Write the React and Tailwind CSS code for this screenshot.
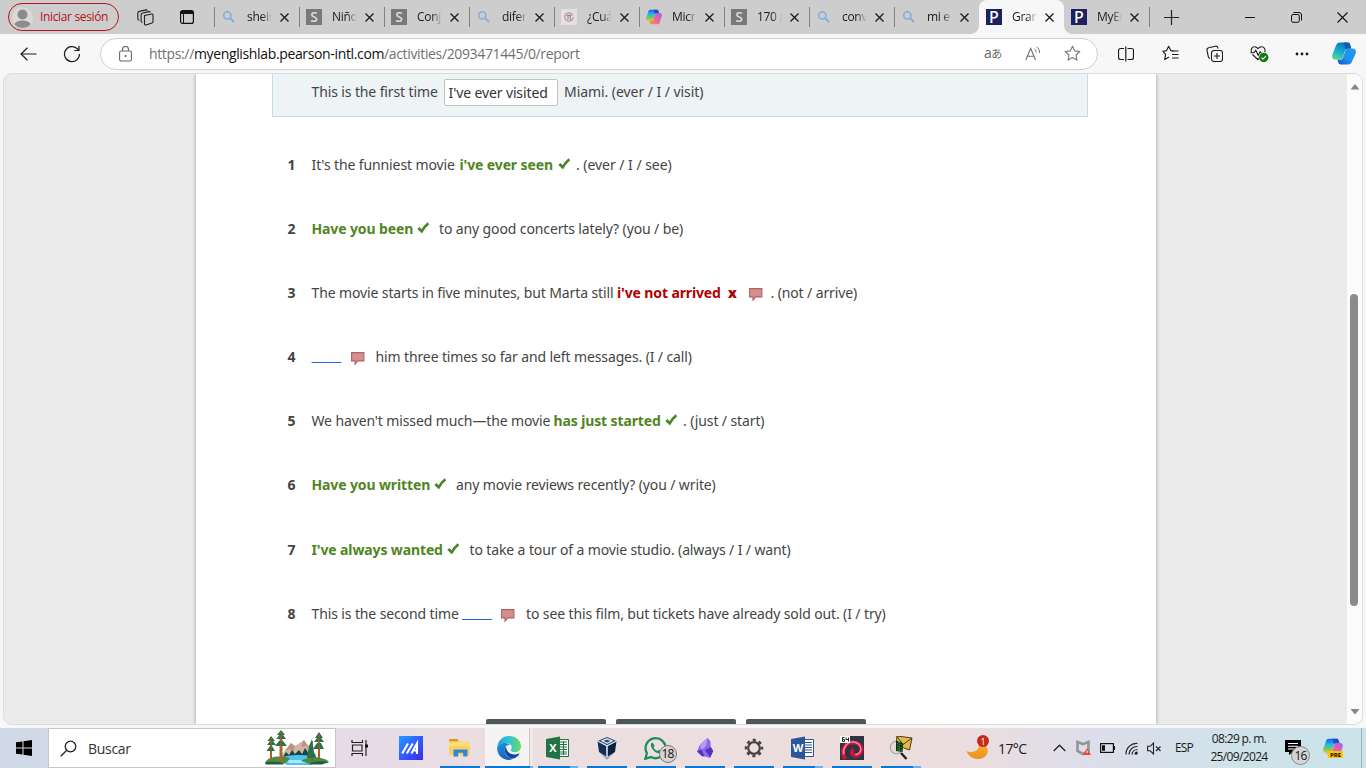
import React from "react";

const Svg = ({ w = 16, h = w, vb, className = "", children }) => (
  <svg width={w} height={h} viewBox={vb || `0 0 ${w} ${h}`} className={`shrink-0 block ${className}`} fill="none">
    {children}
  </svg>
);

const SearchFav = () => (
  <Svg>
    <circle cx="6.3" cy="6.3" r="3.6" stroke="#7fb0dc" strokeWidth="1.5" />
    <path d="M9 9l4.2 4.2" stroke="#7fb0dc" strokeWidth="1.8" />
  </Svg>
);
const SFav = () => (
  <span className="flex size-4 items-center justify-center bg-[#797979] font-['Open_Sans',sans-serif] text-[14px] leading-4 font-semibold text-[#dcdcdc]">S</span>
);
const PFav = () => (
  <span className="flex size-4 items-center justify-center bg-[#1c2260] font-['Noto_Sans',sans-serif] text-[16px] leading-4 font-medium text-white">P</span>
);
const PiFav = () => (
  <Svg>
    <rect width="16" height="16" fill="#e3e1e0" />
    <circle cx="8" cy="8" r="4.2" stroke="#e08a88" strokeWidth="1.2" strokeDasharray="24 4" />
    <path d="M5.600 6.400h5M7 6.600v4M9.300 6.600v3.400l.8.4" stroke="#6f8fb8" strokeWidth="1.100" />
  </Svg>
);

const CopilotColor = ({ w = 16 }) => (
  <Svg w={w} vb="0 0 24 24">
    <defs>
      <linearGradient id="cpa" x1="0" y1="0" x2="0" y2="1"><stop stopColor="#1b62e8" /><stop offset=".4" stopColor="#22b8e8" /><stop offset=".75" stopColor="#7ccb52" /><stop offset="1" stopColor="#f5c62c" /></linearGradient>
      <linearGradient id="cpb" x1="1" y1="0" x2="0" y2="1"><stop stopColor="#a55df0" /><stop offset=".5" stopColor="#ee6498" /><stop offset="1" stopColor="#ff9a3c" /></linearGradient>
    </defs>
    <path d="M7 1h9c1.600 0 2.300.7 2.800 2.300l.8 2.700h-3c-2 0-3 .7-3.600 2.600L10.600 16c-.6 1.600-1.300 2-3 2H3.500C.8 18-.3 16 .5 13L3.600 3.500C4.200 1.800 5.200 1 7 1z" fill="url(#cpa)" />
    <path d="M17 23H8.500c-1.600 0-2.300-.7-2.800-2.300L5 18h2.600c2 0 3-.7 3.600-2.600L13.600 8c.6-1.500 1.300-2 3-2h3.900c2.700 0 3.800 2 3 5l-3.100 9.500c-.6 1.700-1.600 2.500-3.400 2.500z" fill="url(#cpb)" />
    <path d="M11 1h5c1.600 0 2.300.7 2.800 2.300l.8 2.700h-3c-1.500 0-2.500.5-3.100 1.500z" fill="#1c4fc9" />
  </Svg>
);

const CopilotBlue = () => (
  <Svg w={24} h={23} vb="0 0 24 23">
    <defs>
      <linearGradient id="cba" x1=".6" y1="0" x2=".2" y2="1"><stop stopColor="#0a72b8" /><stop offset=".5" stopColor="#18a9cf" /><stop offset="1" stopColor="#5edb93" /></linearGradient>
      <linearGradient id="cbb" x1="1" y1="0" x2="0" y2="1"><stop stopColor="#2a97ee" /><stop offset=".55" stopColor="#1a94f0" /><stop offset="1" stopColor="#1650cf" /></linearGradient>
    </defs>
    <path d="M8 .5h7.500c1.500 0 2.300.9 2.700 2.200l.9 3.800h-2.600c-2 0-3 .7-3.600 2.500l-2 6.500c-.5 1.700-1.300 2.300-2.800 2.300H3.600C.6 17.800-.3 15.500.4 12.500L4 3.500C4.700 1.400 6 .5 8 .5z" fill="url(#cba)" />
    <path d="M16 22.500H9c-1.800 0-2.500-.9-2.900-2.400l-.6-2.300h2.600c1.700 0 2.500-.8 3-2.300l2.200-6.700c.6-1.700 1.500-2.300 3-2.300h4.200c3 0 3.900 2.300 3.200 5L20 19.500c-.7 2.100-2 3-4 3z" fill="url(#cbb)" />
    <path d="M11.500.5h4c1.500 0 2.300.9 2.700 2.200l.9 3.800h-2.600c-1.400 0-2.300.4-2.900 1.200z" fill="#0d5fae" />
  </Svg>
);

const TABS = [
  [SearchFav, "shein"],
  [SFav, "Niño"],
  [SFav, "Conj"],
  [SearchFav, "difer"],
  [PiFav, "¿Cuá"],
  [CopilotColor, "Micr"],
  [SFav, "170 p"],
  [SearchFav, "conv"],
  [SearchFav, "mi e"],
  [PFav, "Gram", true],
  [PFav, "MyEn"],
];

function Tab({ Icon, label, active, line }) {
  return (
    <div className={`relative flex h-full w-[85px] shrink-0 items-center ${active ? "rounded-t-[8px] bg-[#f7f7f7]" : ""}`}>
      {line && <span className="absolute top-[7px] left-0 h-5 w-px bg-[#818181]" />}
      {active && (
        <>
          <span className="absolute bottom-0 -left-2 size-2 bg-[radial-gradient(circle_at_0_0,#cdcdcd_7.5px,#f7f7f7_8px)]" />
          <span className="absolute -right-2 bottom-0 size-2 bg-[radial-gradient(circle_at_100%_0,#cdcdcd_7.5px,#f7f7f7_8px)]" />
        </>
      )}
      <span className="ml-[7px]"><Icon /></span>
      <span className="ml-[10px] w-[25px] overflow-hidden text-[12px] leading-4 tracking-[-0.3px] whitespace-nowrap text-[#1b1b1b] [mask-image:linear-gradient(to_right,black_60%,transparent)]">{label}</span>
      <Svg w={9} className="ml-[8px]"><path d="M.5.5l8 8M8.500.5l-8 8" stroke="#1b1b1b" strokeWidth="1.300" /></Svg>
    </div>
  );
}

function TitleBar() {
  return (
    <div className="flex h-[34px] shrink-0 items-center bg-[#cdcdcd]">
      <div className="ml-2 flex h-7 w-[111px] items-center rounded-full border border-[#b5121b] pl-[3px]">
        <Svg w={21}>
          <defs><clipPath id="av"><circle cx="10.5" cy="10.500" r="10.500" /></clipPath></defs>
          <circle cx="10.500" cy="10.500" r="10.500" fill="#dbd9d6" />
          <g clipPath="url(#av)" fill="#8d8b89"><circle cx="10.500" cy="7.500" r="5" /><ellipse cx="10.500" cy="17.500" rx="8" ry="4" /></g>
        </Svg>
        <span className="ml-[7px] text-[12px] tracking-[-0.35px] whitespace-nowrap text-[#b5121b]">Iniciar sesión</span>
      </div>
      <Svg w={17} className="ml-[18px]">
        <g stroke="#222" strokeWidth="1.100" strokeLinejoin="round" strokeLinecap="round">
          <path d="M7.500 6.500l7.300-1.500c.7-.1 1.200.3 1.200 1v6.600c0 .7-.3 1.100-1 1.300l-6 2c-.8.2-1.500-.2-1.500-1z" />
          <path d="M5 13.300c-.6-.2-.9-.7-.9-1.300V6c0-1.100.6-1.800 1.700-2l6.200-1.400c.6-.1 1 .1 1.100.6" />
          <path d="M1.900 11.300c-.7-.2-1.100-.8-1.100-1.500V4.300c0-1 .6-1.700 1.600-1.900L8.900.9c.6-.1 1 .1 1.200.6" />
        </g>
      </Svg>
      <Svg w={14} className="ml-[26px]">
        <rect x=".6" y=".6" width="12.800" height="12.800" rx="2" stroke="#111" strokeWidth="1.200" />
        <path d="M1 1h12v3H1z" fill="#111" /><path d="M3.500 4v9" stroke="#111" strokeWidth="1" />
      </Svg>
      <div className="ml-5 flex h-full">
        {TABS.map(([Icon, label, active], i) => (
          <Tab key={i} Icon={Icon} label={label} active={active} line={i < 9} />
        ))}
      </div>
      <span className="h-5 w-px bg-[#818181]" />
      <Svg w={15} className="ml-[14px]"><path d="M7.500 0v15M0 7.500h15" stroke="#222" strokeWidth="1.200" /></Svg>
      <div className="ml-[66px] flex items-center">
        <Svg w={10}><path d="M0 5.500h10" stroke="#111" /></Svg>
        <Svg w={11} className="ml-[36px]">
          <rect x=".5" y="2.500" width="7.800" height="7.800" rx="1.500" stroke="#111" />
          <path d="M2.500.5H8A2.500 2.500 0 0 1 10.500 3v5.500" stroke="#111" />
        </Svg>
        <Svg w={11} className="ml-[35px]"><path d="M.5.500l10 10M10.500.5l-10 10" stroke="#111" strokeWidth="1.100" /></Svg>
      </div>
    </div>
  );
}

function Toolbar() {
  return (
    <div className="flex h-[39px] shrink-0 items-center bg-[#f7f7f7]">
      <Svg w={17} h={14} className="ml-[20px]"><path d="M16.500 7H1M7.500.7L1 7l6.500 6.300" stroke="#1b1b1b" strokeWidth="1.200" /></Svg>
      <Svg w={18} className="ml-[26px]"><path d="M16.500 9A7.500 7.500 0 1 1 14 3.500L16 5.300M16 .8v4.700h-4.700" stroke="#1b1b1b" strokeWidth="1.200" /></Svg>
      <div className="ml-[19px] flex h-8 w-[998px] items-center rounded-full border border-[#cfcfcf] bg-white">
        <Svg w={13} h={16} className="ml-[18px]">
          <rect x=".6" y="5" width="11.800" height="10" rx="1.600" stroke="#666" strokeWidth="1.100" />
          <path d="M3.500 5V3.500a3 3 0 0 1 6 0V5" stroke="#666" strokeWidth="1.100" /><circle cx="6.500" cy="10" r="1" fill="#555" />
        </Svg>
        <span className="ml-[17px] w-[835px] text-[14px] tracking-[-0.355px] whitespace-nowrap text-[#707070]">
          https://<span className="text-[#111]">myenglishlab.pearson-intl.com</span>/activities/2093471445/0/report
        </span>
        <span className="w-[18px] font-['Open_Sans','Noto_Sans_CJK_JP',sans-serif] text-[14px] leading-4 tracking-[-0.5px] whitespace-nowrap text-[#666]">a<span className="text-[11px]">あ</span></span>
        <Svg w={16} h={15} className="ml-[23px]">
          <path d="M.8 14L5.700 2.500l4.900 11.500M2.400 10.200h6.600" stroke="#707070" strokeWidth="1.100" />
          <path d="M9.500 3c1 .6 1.600 1.600 1.700 3.500M11.700 1c1.700 1 2.900 2.800 3 6" stroke="#707070" />
        </Svg>
        <Svg w={17} vb="0 0 17 17" className="ml-[23px]"><path d="M8.500 1.200l2.200 4.700 5.100.6-3.800 3.500 1 5.100-4.500-2.500L4 15.100l1-5.100L1.200 6.500l5.100-.6z" stroke="#777" strokeWidth="1.100" strokeLinejoin="round" /></Svg>
      </div>
      <Svg w={16} className="ml-[20px]">
        <path d="M6 2.500H2.500a2 2 0 0 0-2 2v7a2 2 0 0 0 2 2H6M9.500 2.500h4a2 2 0 0 1 2 2v7a2 2 0 0 1-2 2h-4M7.800.5v15" stroke="#1b1b1b" strokeWidth="1.200" />
      </Svg>
      <Svg w={17} className="ml-[28px]">
        <path d="M11.500 6l-2.700-.4L6.600 1.200 4.600 5.600.8 6.200l2.800 3.200-.9 5L7 12" stroke="#1b1b1b" strokeWidth="1.100" strokeLinejoin="round" />
        <path d="M10 6h6.500M10 9.500h6.500M10 13h6.500" stroke="#1b1b1b" strokeWidth="1.200" />
      </Svg>
      <Svg w={17} className="ml-[27px]">
        <rect x="5.500" y="5.500" width="11" height="11" rx="2.500" stroke="#1b1b1b" strokeWidth="1.100" />
        <path d="M11 8v6M8 11h6" stroke="#1b1b1b" strokeWidth="1.100" />
        <path d="M4 13.500c-1-.2-1.500-.9-1.700-1.800L1 5.300C.8 4 1.400 3 2.700 2.700l6.500-1.500c1.300-.3 2.200.2 2.600 1.500l.3 1" stroke="#1b1b1b" strokeWidth="1.100" />
      </Svg>
      <Svg w={20} h={18} className="ml-[27px]">
        <path d="M9 14.500L7.500 13M1.500 7.500C.3 4.500 2 1.700 4.500 1.700c1.700 0 2.800.9 3.500 1.900.7-1 1.900-1.900 3.600-1.900 2.600 0 4.300 2.800 3.200 5.500" stroke="#1b1b1b" strokeWidth="1.100" />
        <path d="M.5 7.800h3.300l2-2.500 2.400 5 2-3.500 1 1.200M2.500 9.500L8 14.800" stroke="#1b1b1b" strokeWidth="1.100" />
        <circle cx="13.700" cy="12.500" r="4.700" fill="#107c10" /><path d="M11.500 12.600l1.500 1.500 2.800-2.900" stroke="#fff" strokeWidth="1.100" />
      </Svg>
      <Svg w={14} h={4} className="ml-[25px]"><g fill="#1b1b1b"><circle cx="2" cy="2" r="1.400" /><circle cx="7" cy="2" r="1.400" /><circle cx="12" cy="2" r="1.400" /></g></Svg>
      <div className="ml-[23px]"><CopilotBlue /></div>
    </div>
  );
}

const Check = () => (
  <Svg w={13} h={11} className="-mt-[3px]"><path d="M1.300 6L4.700 9.300Q7.500 4.500 11.400 1.300" stroke="#4c8527" strokeWidth="2.700" /></Svg>
);
const Bubble = () => (
  <Svg w={14} h={13}><path d="M.6.600h12.300v8.300H6.700L4 12.300V8.900H.6z" fill="#d58f8f" stroke="#ae6262" strokeWidth="1.100" /></Svg>
);
const Blank = () => <span className="block -translate-y-px tracking-[-0.35px] text-[#1f5fe8]">_____</span>;
const Good = ({ children }) => <b className="font-bold text-[#50861f]">{children}</b>;

function Row({ n, children, className = "h-16" }) {
  return (
    <div className={`flex shrink-0 items-center whitespace-nowrap ${className}`}>
      <b className="ml-[91.5px] w-6 shrink-0">{n}</b>
      {children}
    </div>
  );
}

function Questions() {
  return (
    <div className="mt-[16px] flex flex-col">
      <Row n="1">
        <span className="w-[148px]">It's the funniest movie</span><span className="w-[98.500px]"><Good>i've ever seen</Good></span>
        <span className="w-[18px]"><Check /></span><span className="tracking-[-0.04px]">. (ever / I / see)</span>
      </Row>
      <Row n="2">
        <span className="w-[105px]"><Good>Have you been</Good></span><span className="w-[22.500px]"><Check /></span>
        <span>to any good concerts lately? (you / be)</span>
      </Row>
      <Row n="3">
        <span className="w-[305.500px]">The movie starts in five minutes, but Marta still</span>
        <b className="w-[111px] text-[#b00000]">i've not arrived</b><b className="w-[21px] font-black text-[#b00000]">x</b>
        <span className="mt-0.5 w-[21.500px]"><Bubble /></span><span>. (not / arrive)</span>
      </Row>
      <Row n="4">
        <span className="w-[39px]"><Blank /></span><span className="mt-0.5 w-[25px]"><Bubble /></span>
        <span>him three times so far and left messages. (I / call)</span>
      </Row>
      <Row n="5">
        <span className="w-[242px]">We haven't missed much—the movie</span><span className="w-[111.500px]"><Good>has just started</Good></span>
        <span className="w-[18px]"><Check /></span><span>. (just / start)</span>
      </Row>
      <Row n="6">
        <span className="w-[122.500px]"><Good>Have you written</Good></span><span className="w-[22px]"><Check /></span>
        <span>any movie reviews recently? (you / write)</span>
      </Row>
      <Row n="7" className="h-[66px]">
        <span className="w-[135.500px]"><Good>I've always wanted</Good></span><span className="w-[22.500px]"><Check /></span>
        <span>to take a tour of a movie studio. (always / I / want)</span>
      </Row>
      <Row n="8" className="h-[62px]">
        <span className="w-[150.500px]">This is the second time</span><span className="w-[38.500px]"><Blank /></span>
        <span className="mt-0.5 w-[25.500px]"><Bubble /></span><span>to see this film, but tickets have already sold out. (I / try)</span>
      </Row>
    </div>
  );
}

function Viewport() {
  return (
    <div className="flex h-[655px] shrink-0 bg-[#f7f7f7] px-[3px] pb-[3px]">
      <div className="flex w-full overflow-hidden rounded-[9px] border border-[#dcdcdc] bg-[#ebebeb]">
        <main className="ml-[192px] flex w-[960px] flex-col overflow-hidden bg-white font-['Noto_Sans',sans-serif] text-[14px] leading-5 tracking-[-0.12px] text-[#444] shadow-[0_0_4px_rgba(0,0,0,0.35)]">
          <div className="mr-[68px] ml-[76px] flex h-[43px] shrink-0 items-start border border-t-0 border-[#c5dbe7] bg-[#eef3f6] pt-[5px] pl-[38.500px] whitespace-nowrap">
            <span className="mt-[3px] w-[132.500px]">This is the first time</span>
            <span className="h-[27px] w-[114px] rounded-[2px] border border-[#c3c3c3] bg-white pl-[3.500px] leading-[26px] text-[#333]">I've ever visited</span>
            <span className="mt-[3px] ml-[6px] tracking-[-0.06px]">Miami. (ever / I / visit)</span>
          </div>
          <Questions />
          <div className="mt-auto ml-[290px] flex gap-[10px]">
            <span className="h-[5px] w-[120px] rounded-t-[2px] bg-[#4d5758]" />
            <span className="h-[5px] w-[120px] rounded-t-[2px] bg-[#4d5758]" />
            <span className="h-[5px] w-[120px] rounded-t-[2px] bg-[#4d5758]" />
          </div>
        </main>
        <div className="ml-auto flex w-[15px] flex-col items-center bg-[#fbfbfb] pt-[10px] pb-[9px]">
          <Svg w={10} h={6}><path d="M5 0l4.500 5.500h-9z" fill="#858585" /></Svg>
          <div className="mt-[204px] mr-px h-[312px] w-2 rounded-full bg-[#8b8b8b]" />
          <Svg w={10} h={6} className="mt-auto"><path d="M5 5.500L.5 0h9z" fill="#858585" /></Svg>
        </div>
      </div>
    </div>
  );
}

const TaskView = () => (
  <Svg w={18} h={18} className="-ml-[3px]"><path d="M1 1v2.500h10.500V1M1.500 6h9.500v6H1.500zM1 17v-2.500h10.500V17M15 1v16" stroke="#222" strokeWidth="1.200" /><path d="M14 5.500h3v3h-3z" fill="#111" /></Svg>
);
const Armoury = () => (
  <Svg w={24}>
    <defs><linearGradient id="arm" x1="0" y1="0" x2="1" y2="1"><stop stopColor="#1fa2ff" /><stop offset=".45" stopColor="#3360ff" /><stop offset="1" stopColor="#3b2bea" /></linearGradient></defs>
    <path d="M0 0h24v24H0z" fill="url(#arm)" />
    <path d="M3.200 17.500L9 7.500M7.800 17.500l6-10M12.400 17.500L18 7.500v10.500M15 14.500h3" stroke="#fff" strokeWidth="2.100" />
  </Svg>
);
const Explorer = () => (
  <Svg w={22} h={20}>
    <path d="M0 2.500C0 1.700.5 1 1.300 1h7l1.700 2.500H0z" fill="#d39a17" />
    <path d="M0 3.500h19.500c.8 0 1.300.5 1.300 1.300V17H0z" fill="#fbd062" /><path d="M0 5h8l2-1.500h10.800V8H0z" fill="#ffdc7a" />
    <path d="M4.500 18.500v-7h14v7h-4.300v-3.700h-5v3.700z" fill="#2f87cf" />
  </Svg>
);
const Edge = () => (
  <Svg w={24}>
    <defs>
      <linearGradient id="ea" x1="0" y1=".3" x2="1" y2=".3"><stop stopColor="#1e9ee0" /><stop offset=".5" stopColor="#2fc3d6" /><stop offset="1" stopColor="#6fdb5b" /></linearGradient>
      <linearGradient id="eb" x1="0" y1="0" x2=".3" y2="1"><stop stopColor="#1c93de" /><stop offset="1" stopColor="#1163c0" /></linearGradient>
    </defs>
    <path d="M.3 11C.8 4.700 5.800 0 12 0c6.700 0 12 4.800 12 10.300 0 3.600-2.700 6-6 6-2.900 0-4.300-1.100-4.300-2 0-.7 1-1.100 1-2.800C14.700 9 12.200 7 9 7 4.800 7 1.500 8.600.3 11z" fill="url(#ea)" />
    <path d="M.2 11.500C1 8.700 4.500 6.800 8.500 7c2 .1 4 1 5 2-3-.8-5.800 1.600-5.800 5.300 0 5 4.300 8.700 9 8.300C15.300 23.500 13.700 24 12 24 5.200 24-.4 18.300.2 11.500z" fill="url(#eb)" />
    <path d="M9 11c-1.300 1-1.500 3-1 5 1.200 4.200 5 6.800 8.700 6.600 2.500-.9 4.400-2.500 5.600-4.500.3-.5-.1-.8-.6-.5-5 2.200-11.700.6-12.700-6.600z" fill="#0c4b97" />
  </Svg>
);
const Office = ({ letter, color, grid }) => (
  <span className="relative block h-6 w-[23px]">
    <Svg w={23} h={24}>
      <path d="M12 3.500h10.500v17H12z" fill="#fff" stroke={color} />
      {grid ? <path d="M14 6h7M14 8.500h7M14 11h7M14 13.500h7M14 16h7M14 18h7M17.500 5v14" stroke={color} strokeWidth="1.100" /> : <path d="M14 6.500h7M14 9h7M14 11.500h7M14 14h7M14 16.500h7" stroke={color} strokeWidth="1.200" />}
      <path d="M0 3l14-2.500v23L0 21z" fill={color} />
    </Svg>
    <span className="absolute top-0 left-0 w-[14px] text-center font-['Open_Sans',sans-serif] text-[11px] leading-6 font-bold text-white">{letter}</span>
  </span>
);
const VBox = () => (
  <Svg w={20} h={24}>
    <path d="M3 17l7 7 7-7z" fill="#9daac4" />
    <path d="M10 1l9.500 4-9.500 5L.5 5z" fill="#24466f" /><path d="M.5 5l9 5v10.500L2 16z" fill="#142f57" /><path d="M19.500 5l-9 5v10.500L18 16z" fill="#0c2142" />
    <path d="M.5 5l9.500 4.800L19.500 5M10 9.800V21M5 4.800l5-2 5 2-5 2.500z" stroke="#d8e3f0" strokeWidth="1.300" />
  </Svg>
);
const Whats = () => (
  <span className="relative block size-6">
    <Svg w={24}>
      <path d="M1.300 22.700l1.600-5.500A10 10 0 1 1 7 21.100z" stroke="#1f8f5a" strokeWidth="2.300" />
      <path d="M8.500 6.500L7 7.800c-.7 2 .5 4.600 2.500 6.600s4.500 3.300 6.800 2.800l1.400-1.700-3-1.800-1.500 1.200c-1.500-.5-3-2-3.600-3.600l1.100-1.500z" fill="#1f8f5a" />
    </Svg>
    <span className="absolute top-[9px] left-[15px] flex h-[18px] w-[18px] items-center justify-center rounded-full border border-[#777] bg-[#d9d3d3] text-[12px] leading-none tracking-[-0.8px] text-[#111]">18</span>
  </span>
);
const Obsidian = () => (
  <Svg w={18} h={22}>
    <path d="M4 7.500L11.500.8l3 3.700.3 5.500 2.400 4-3 6.500c-1 .8-5-1.500-8-1.500L1 14.500z" fill="#8b6ae8" />
    <path d="M4 7.500L11.500.8 10 9l-4.500 4z" fill="#b39df5" /><path d="M1 14.500l4.500-2 3 7-2.500-.3zM9 13l5.800-3 2.400 4-3 6.500z" fill="#5b2fc0" />
  </Svg>
);
const Gear = () => (
  <Svg w={20}>
    <circle cx="10" cy="10" r="5.800" stroke="#484444" strokeWidth="2.200" />
    <circle cx="10" cy="10" r="8" stroke="#484444" strokeWidth="2.500" strokeDasharray="3.140 3.143" strokeDashoffset="1.570" />
  </Svg>
);
const Debian = () => (
  <Svg w={24}>
    <path d="M0 0h24v24H0z" fill="#2e3440" />
    <path d="M5.500 23C.5 17 3.500 7.500 11.500 6.500c6-.7 10.500 2.800 10 7.500-.4 4.300-4 6.500-7.300 5.300-2.700-1-3-4.500-.6-5.800" stroke="#c91440" strokeWidth="4" />
    <path d="M3.700 18.500C2.500 12.500 6.500 6.500 12 6c5-.4 9 3 8.800 7.500-.2 3.500-3 5.200-5.500 4.700" stroke="#fc7b90" strokeWidth="1.700" />
    <path d="M0 0h10v7H0z" fill="#fff" /><path d="M4.500 1.500h-2v4h2v-2h-2M6 1.500v2h2.500M8.500 1.500v4" stroke="#222" />
  </Svg>
);
const MailLens = () => (
  <Svg w={24}>
    <path d="M8 0l15 2-2.500 12L7 9z" fill="#e5b84d" stroke="#4b3a10" /><path d="M8 .5l6 8L23 2" stroke="#4b3a10" />
    <circle cx="7.500" cy="11.500" r="6.300" fill="#dcdcd5" stroke="#989898" /><path d="M7 4.500l7 3-.5 8.500-6.500-1z" fill="#0b2f0d" />
    <path d="M8 7l5 2M8 10l5 2M8 13l5 1.500M10 6v9" stroke="#3fb43c" strokeDasharray="1 1" /><path d="M12 17l5.500 6" stroke="#222" strokeWidth="2.500" />
  </Svg>
);

const APPS = [
  { el: <TaskView /> },
  { el: <Armoury /> },
  { el: <Explorer />, bar: 1 },
  { el: <Edge />, bar: 3 },
  { el: <Office letter="X" color="#217346" grid />, bar: 2 },
  { el: <VBox />, bar: 1 },
  { el: <Whats />, bar: 1 },
  { el: <Obsidian />, bar: 1 },
  { el: <Gear />, bar: 1 },
  { el: <Office letter="W" color="#2b579a" />, bar: 2 },
  { el: <Debian />, bar: 1 },
  { el: <MailLens />, bar: 2 },
];

const AppButton = ({ el, bar }) => (
  <div className={`flex h-10 w-[49px] flex-col ${bar === 3 ? "bg-[linear-gradient(to_right,transparent_1px,#f8f3f3_1px_45px,#cfc7c8_45px_46px,#f1e8e8_46px)]" : ""}`}>
    <div className="flex h-[38px] items-center justify-center pt-[2px]">{el}</div>
    {bar === 1 && <div className="ml-[5px] h-0.5 w-10 bg-[#0a78d6]" />}
    {bar === 2 && <div className="ml-[5px] flex h-0.5"><i className="w-8 bg-[#0a78d6]" /><i className="w-2 bg-[#6cb0ec]" /></div>}
    {bar === 3 && <div className="ml-px flex h-0.5"><i className="w-[45px] bg-[#0a78d6]" /><i className="w-[3px] bg-[#6cb0ec]" /></div>}
  </div>
);

const Landscape = () => (
  <Svg w={64} h={36}>
    <path d="M15 27l11-14 4 3 9-6 13 16z" fill="#d3b5a5" /><path d="M26 13l-6 8 5-2 3 3 2-6zM39 10l-3 7 5-1 3 3z" fill="#b99386" />
    <path d="M18 27l3-5 3 3 3-5 3 4 4-4 3 4 3-6 4 6 4-3 3 6z" fill="#17494a" />
    <path d="M12 29c10-5 32-5 43-1l-9 7H22z" fill="#4cc4ee" /><path d="M20 30h26l-6 3H24z" fill="#a8e8fa" />
    <path d="M0 33c2-6 13-8 24-5 2 1-3 5-6 6H1zM36 31c7-5 22-5 28 1l-7 2H45z" fill="#4d8b3d" /><path d="M0 33c5-2 12-1 18 0v1.500H1zM45 33c6-2 12-2 19-1l-7 2.500H45z" fill="#215c42" />
    <path d="M6 9v22M54 6v23" stroke="#a85f2a" strokeWidth="2" /><path d="M16 4v28" stroke="#b0642c" strokeWidth="3" /><path d="M47 11v20" stroke="#7d5c2c" strokeWidth="1.500" />
    <path d="M6 6L2.500 11H5l-3 4h9l-3-4h2zM5 16l-3.500 5H10l-3-5zM16 0l-4 5h2.500L11 9h10l-3-4h2zM14 11l-4 5h12l-4-5zM54 2l-4 6h2l-3 4h10l-3-4h2zM52 13l-4 6h11l-3-6zM47 9l-3 7-2 12h8l-2-12z" fill="#2c7049" />
    <path d="M16 2v15M6 8v12M54 4v16" stroke="#a85f2a" strokeWidth="1" />
  </Svg>
);

function Taskbar() {
  return (
    <div className="flex h-10 shrink-0 items-center bg-[linear-gradient(to_right,#cfd9e7_0,#d9d9e7_150px,#e6dbe6_340px,#ecdfe1_520px,#eddedd_880px,#eadde0_980px,#dddeea_1090px,#d0e2ea_1230px,#c9e3e9_1366px)]">
      <div className="flex w-12 justify-center"><Svg w={16} vb="0 0 16 16"><path d="M0 2.300L6.500 1.400v6.100H0zM7.500 1.200L16 0v7.500H7.500zM0 8.500h6.500v6.100L0 13.700zM7.500 8.500H16V16l-8.500-1.200z" fill="#000" /></Svg></div>
      <div className="flex h-10 w-72 items-center border border-[#c5c5c5] bg-white">
        <Svg w={17} className="ml-[11px]"><circle cx="10.500" cy="6.500" r="5.300" stroke="#222" strokeWidth="1.300" /><path d="M6.700 10.300L.7 16.300" stroke="#222" strokeWidth="1.300" /></Svg>
        <span className="ml-[11px] text-[14px] tracking-[-0.3px] text-[#333]">Buscar</span>
        <div className="mr-[6px] ml-auto"><Landscape /></div>
      </div>
      <div className="ml-px flex">{APPS.map((a, i) => <AppButton key={i} {...a} />)}</div>
      <div className="relative ml-[41px] h-6 w-6">
        <Svg w={24}>
          <defs><linearGradient id="moon" x1="0" y1="0" x2="0" y2="1"><stop stopColor="#f8b62d" /><stop offset="1" stopColor="#ee8d1e" /></linearGradient></defs>
          <path d="M.3 14.500c3 2.500 9 2 11.500-1.500 1.500-2.200 1.500-5 .2-7.500 5 .5 9.700 4 9.700 9.300 0 4.500-4 8.200-9.200 8.200-6 0-10.700-3.500-12.200-8.500z" fill="url(#moon)" />
        </Svg>
        <span className="absolute -top-px left-[11px] flex size-3 items-center justify-center rounded-full bg-[#c42b1c] text-[9px] leading-none text-white">1</span>
      </div>
      <span className="ml-[8px] w-[30px] text-[14px] tracking-[-0.6px] whitespace-nowrap text-[#1b1b1b]">17<span className="font-['Noto_Sans',sans-serif]">°</span>C</span>
      <Svg w={13} h={8} className="ml-[25px]"><path d="M.7 7L6.500 1.200 12.300 7" stroke="#222" strokeWidth="1.300" /></Svg>
      <Svg w={15} h={16} className="ml-[10px]">
        <path d="M1.500 2l5.500 2.200L12.500 2v9L7 14l-5.500-3z" stroke="#939497" strokeWidth="2.600" /><path d="M11 8l4 7H7z" fill="#f04438" /><path d="M11 10.500v2.500" stroke="#fff" />
      </Svg>
      <Svg w={15} h={10} className="ml-[9px]"><rect x=".6" y=".6" width="12.800" height="8.800" stroke="#111" strokeWidth="1.200" /><path d="M2 2.200h3v5.600H2zM13.500 3H15v4h-1.500z" fill="#111" /></Svg>
      <Svg w={14} h={13} className="ml-[10px]"><path d="M1 12.500A10.500 10.500 0 0 1 12.500 1.500M4 12.500A8 8 0 0 1 12.500 4.500M7 12.500a5.500 5.500 0 0 1 5.500-5" stroke="#222" strokeWidth="1.200" /><path d="M12.500 12.500h-3a3 3 0 0 1 3-3z" fill="#111" /></Svg>
      <Svg w={15} h={13} className="ml-[8px]"><path d="M.6 4.300h2.600L6.500 1v11L3.200 8.800H.6z" stroke="#222" strokeWidth="1.100" /><path d="M9 4.500l4.500 4.500M13.500 4.500L9 9" stroke="#222" strokeWidth="1.100" /></Svg>
      <span className="ml-[13px] w-[20px] text-[12px] tracking-[-0.9px] text-[#1b1b1b]">ESP</span>
      <div className="ml-[12px] flex w-[64px] flex-col items-center text-[12px] leading-[18px] tracking-[-0.65px] whitespace-nowrap text-[#1b1b1b]"><span>08:29 p. m.</span><span>25/09/2024</span></div>
      <div className="relative ml-[14px] h-4 w-4">
        <Svg w={16} h={15}><path d="M0 0h16v12H8l-4 3v-3H0z" fill="#000" /><path d="M3 3.500h10M3 6.200h10M3 9h6" stroke="#fff" strokeWidth="1.100" /></Svg>
        <span className="absolute top-[6px] left-[6px] flex size-[19px] items-center justify-center rounded-full border border-[#8a8a8a] bg-[#d3d6d8] text-[12px] leading-none tracking-[-0.8px] text-[#111]">16</span>
      </div>
      <div className="relative ml-[22px] h-5 w-5">
        <CopilotColor w={20} />
        <span className="absolute top-[13px] left-[5px] flex h-[7px] w-[15px] items-center justify-center rounded-[1px] bg-[#ffc400] text-[6px] leading-none font-bold text-black">PRE</span>
      </div>
      <span className="ml-[18px] h-10 w-px bg-[#9eb0b7]" />
    </div>
  );
}

export default function App() {
  return (
    <div className="flex h-[768px] w-[1366px] flex-col overflow-hidden bg-[#f7f7f7] font-['Open_Sans','Noto_Sans',sans-serif]">
      <TitleBar />
      <Toolbar />
      <Viewport />
      <Taskbar />
    </div>
  );
}
